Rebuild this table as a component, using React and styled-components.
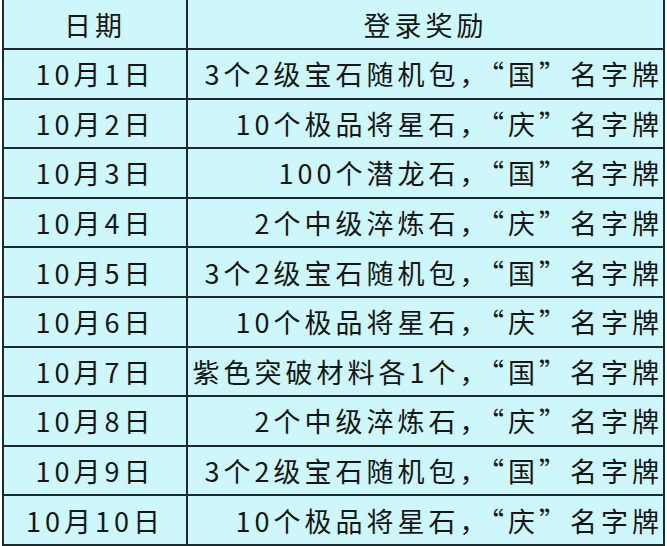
import React from 'react';
import styled, { createGlobalStyle } from 'styled-components';

const GlobalStyle = createGlobalStyle`
  html, body {
    margin: 0;
    padding: 0;
    background: #ffffff;
    overflow: hidden;
  }
`;

const Wrap = styled.div`
  width: 667px;
  height: 546px;
  overflow: hidden;
`;

const Table = styled.table`
  border-collapse: collapse;
  margin: -2px 0 0 2px;
  width: 663px;
  table-layout: fixed;
  background: #cdf7fa;
  font-family: "Noto Sans CJK SC", "Noto Sans", sans-serif;
  font-size: 27px;
  color: #161616;
  letter-spacing: 4px;
`;

const Row = styled.tr`
  height: ${(p) => (p.$head ? '50px' : '49.6px')};
`;

const Cell = styled.td`
  border: 2px solid #1d2a2b;
  padding: 0;
  text-align: ${(p) => (p.$right ? 'right' : 'center')};
  width: ${(p) => (p.$date ? '182px' : 'auto')};
  white-space: nowrap;
  line-height: 1;
  vertical-align: middle;
`;

const rows = [
  ['10月1日', '3个2级宝石随机包，“国”名字牌'],
  ['10月2日', '10个极品将星石，“庆”名字牌'],
  ['10月3日', '100个潜龙石，“国”名字牌'],
  ['10月4日', '2个中级淬炼石，“庆”名字牌'],
  ['10月5日', '3个2级宝石随机包，“国”名字牌'],
  ['10月6日', '10个极品将星石，“庆”名字牌'],
  ['10月7日', '紫色突破材料各1个，“国”名字牌'],
  ['10月8日', '2个中级淬炼石，“庆”名字牌'],
  ['10月9日', '3个2级宝石随机包，“国”名字牌'],
  ['10月10日', '10个极品将星石，“庆”名字牌'],
];

export default function App() {
  return (
    <Wrap>
      <GlobalStyle />
      <Table>
        <tbody>
          <Row $head>
            <Cell $date>日期</Cell>
            <Cell>登录奖励</Cell>
          </Row>
          {rows.map(([d, r]) => (
            <Row key={d}>
              <Cell $date>{d}</Cell>
              <Cell $right>{r}</Cell>
            </Row>
          ))}
        </tbody>
      </Table>
    </Wrap>
  );
}
